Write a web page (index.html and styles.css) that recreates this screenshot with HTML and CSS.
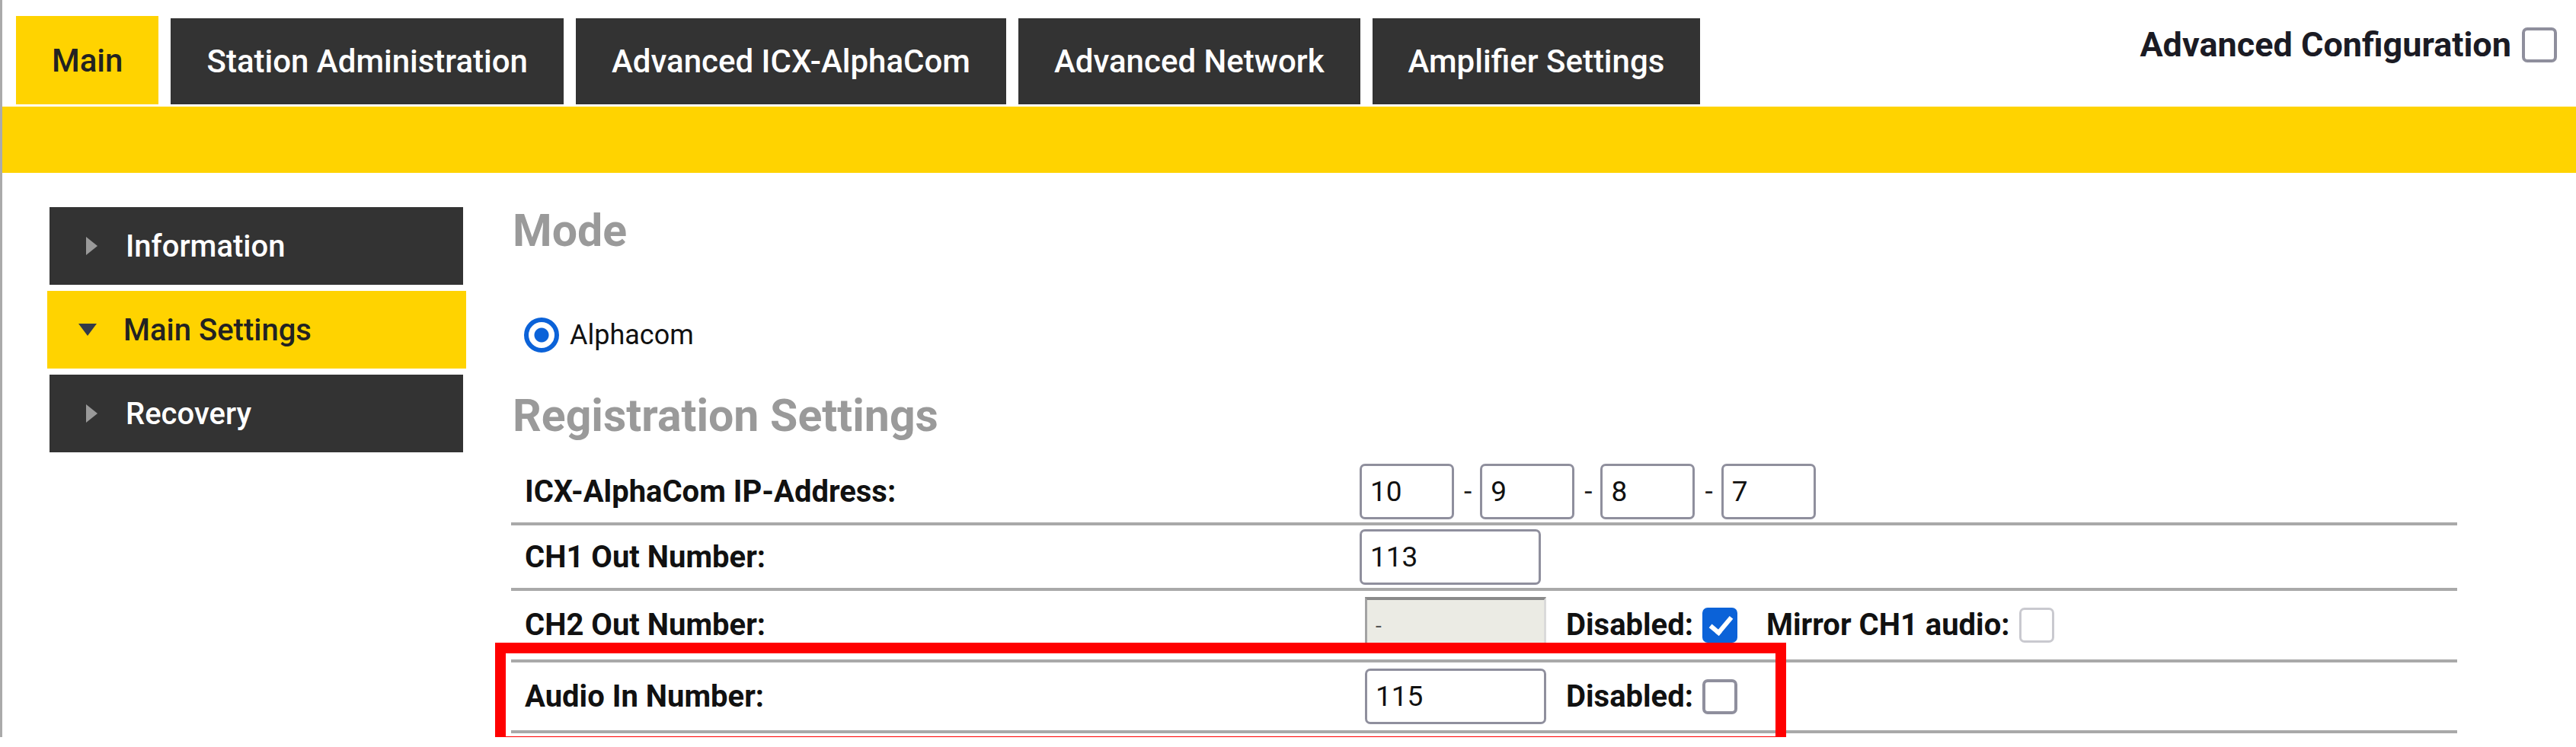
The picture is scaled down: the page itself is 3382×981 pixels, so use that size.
FILE: index.html
```html
<!DOCTYPE html>
<html lang="en">
<head>
    <meta charset="UTF-8">
    <meta name="viewport" content="width=device-width, initial-scale=1.0">
    <title>Main Settings</title>
    <link rel="stylesheet" href="styles.css">
</head>
<body>
    <div class="page">
        <header class="topbar">
            <nav class="tabs">
                <a class="tab active" href="#">Main</a>
                <a class="tab" href="#">Station Administration</a>
                <a class="tab" href="#">Advanced ICX-AlphaCom</a>
                <a class="tab" href="#">Advanced Network</a>
                <a class="tab" href="#">Amplifier Settings</a>
            </nav>
            <label class="adv-config">Advanced Configuration <input type="checkbox" class="chk"></label>
        </header>
        <div class="stripe"></div>

        <main class="layout">
            <aside class="sidebar">
                <a class="side-item" href="#"><span class="arrow right"></span>Information</a>
                <a class="side-item active" href="#"><span class="arrow down"></span>Main Settings</a>
                <a class="side-item" href="#"><span class="arrow right"></span>Recovery</a>
            </aside>

            <section class="content">
                <h2>Mode</h2>
                <label class="radio-line"><input type="radio" name="mode" class="radio" checked> Alphacom</label>

                <h2 class="reg-title">Registration Settings</h2>
                <div class="settings">
                    <div class="row">
                        <span class="label">ICX-AlphaCom IP-Address:</span>
                        <div class="value">
                            <input class="field ip" type="text" value="10">
                            <span class="sep">-</span>
                            <input class="field ip" type="text" value="9">
                            <span class="sep">-</span>
                            <input class="field ip" type="text" value="8">
                            <span class="sep">-</span>
                            <input class="field ip" type="text" value="7">
                        </div>
                    </div>
                    <div class="row">
                        <span class="label">CH1 Out Number:</span>
                        <div class="value">
                            <input class="field num" type="text" value="113">
                        </div>
                    </div>
                    <div class="row opt-row">
                        <span class="label">CH2 Out Number:</span>
                        <div class="value">
                            <input class="field num" type="text" value="-" disabled>
                            <label class="opt">Disabled: <input type="checkbox" class="chk" checked></label>
                            <label class="opt mirror">Mirror CH1 audio: <input type="checkbox" class="chk" disabled></label>
                        </div>
                    </div>
                    <div class="row opt-row">
                        <span class="label">Audio In Number:</span>
                        <div class="value">
                            <input class="field num" type="text" value="115">
                            <label class="opt">Disabled: <input type="checkbox" class="chk"></label>
                        </div>
                    </div>
                </div>
            </section>
        </main>

        <div class="highlight"></div>
    </div>
</body>
</html>
```

FILE: styles.css
```css
body {
    margin: 0;
    padding: 0;
    font-family: Roboto, "Noto Sans", sans-serif;
    color: #222;
    background: #fff;
    overflow: hidden;
}

.page {
    position: relative;
    height: 968px;
    border-left: 3px solid #aaa;
}

/* top tabs */
.topbar {
    display: flex;
    justify-content: space-between;
    align-items: flex-start;
    padding: 21px 25px 0 18px;
    height: 116px;
}

.tabs {
    display: flex;
    align-items: flex-end;
    gap: 16px;
    height: 116px;
}

.tab {
    display: flex;
    align-items: center;
    height: 113px;
    padding: 0 47px;
    background: #333;
    color: #fff;
    font-size: 42px;
    font-weight: 500;
    text-decoration: none;
    white-space: nowrap;
}

.tab.active {
    height: 116px;
    background: #ffd300;
    color: #222;
}

.adv-config {
    display: flex;
    align-items: center;
    gap: 14px;
    margin-top: 11px;
    font-size: 45px;
    font-weight: bold;
    color: #1b1b24;
}

.stripe {
    height: 87px;
    margin-top: 3px;
    background: #ffd300;
}

/* body area */
.layout {
    display: flex;
    align-items: flex-start;
    gap: 63px;
    padding: 41px 0 0 62px;
}

.sidebar {
    display: flex;
    flex-direction: column;
    gap: 8px;
    width: 543px;
    margin-top: 4px;
}

.side-item {
    display: flex;
    align-items: center;
    height: 102px;
    padding-left: 48px;
    background: #333;
    color: #fff;
    font-size: 40px;
    font-weight: 500;
    text-decoration: none;
}

.side-item.active {
    margin: 0 -4px 0 -3px;
    padding-left: 41px;
    background: #ffd300;
    color: #222;
}

.arrow {
    width: 0;
    height: 0;
}

.arrow.right {
    border-left: 15px solid #9a9a9a;
    border-top: 12px solid transparent;
    border-bottom: 12px solid transparent;
    margin-right: 37px;
}

.arrow.down {
    border-top: 16px solid #333a48;
    border-left: 12.5px solid transparent;
    border-right: 12.5px solid transparent;
    margin-right: 35px;
}

/* content */
.content {
    width: 2555px;
}

.content h2 {
    margin: 0;
    padding-left: 2px;
    font-size: 59px;
    line-height: 70px;
    font-weight: bold;
    color: #9a9a9a;
}

.radio-line {
    display: flex;
    align-items: center;
    gap: 14px;
    height: 46px;
    margin: 79px 0 0 17px;
    font-size: 36px;
    line-height: 46px;
    color: #111;
}

.radio {
    appearance: none;
    box-sizing: border-box;
    width: 46px;
    height: 46px;
    margin: 0;
    border: 6px solid #0b62d8;
    border-radius: 50%;
    background: radial-gradient(circle, #0b62d8 0 9px, #fff 10px);
}

.content h2.reg-title {
    margin-top: 48px;
}

.settings {
    margin-top: 23px;
}

.row {
    display: grid;
    grid-template-columns: 1114px auto;
    align-items: center;
    padding: 5px 0 4px;
    border-bottom: 4px solid #a9a9a9;
}

.row.opt-row {
    padding: 8px 0 9px;
}

.row.opt-row:last-child {
    padding-bottom: 8px;
}

.label {
    padding-left: 18px;
    font-size: 40px;
    font-weight: bold;
    color: #111;
}

.value {
    display: flex;
    align-items: center;
}

.opt-row .value {
    padding-left: 7px;
}

.field {
    appearance: none;
    box-sizing: border-box;
    height: 73px;
    margin: 0;
    padding: 0 0 0 11px;
    border: 3px solid #8f8f9d;
    border-radius: 7px;
    background: #fff;
    font-family: Roboto, sans-serif;
    font-size: 37px;
    color: #111;
}

.field.ip {
    width: 124px;
}

.field.num {
    width: 238px;
}

.field:disabled {
    border-width: 4px 3px 3px;
    border-color: #8a8a8a #dadada #dadada #a3a3a3;
    border-radius: 0;
    background: #ebebe4;
    color: #555;
    font-size: 28px;
}

.sep {
    margin: 0 11px 0 13px;
    font-size: 37px;
    color: #222;
}

.opt {
    display: flex;
    align-items: center;
    gap: 12px;
    margin-left: 26px;
    font-size: 40px;
    font-weight: bold;
    color: #111;
}

.opt.mirror {
    margin-left: 38px;
}

.chk {
    appearance: none;
    position: relative;
    box-sizing: border-box;
    width: 46px;
    height: 46px;
    margin: 0;
    border: 4px solid #8f8f9d;
    border-radius: 7px;
    background: #fff;
}

.chk:checked {
    border-color: #0b62d8;
    background: #0b62d8;
}

.chk:checked::after {
    content: "";
    position: absolute;
    left: 12px;
    top: 2px;
    width: 11px;
    height: 23px;
    border: solid #fff;
    border-width: 0 6px 6px 0;
    transform: rotate(40deg);
}

.chk:disabled {
    border: 3px solid #c9c9cf;
}

/* annotation frame */
.highlight {
    position: absolute;
    left: 647px;
    top: 844px;
    width: 1695px;
    height: 137px;
    box-sizing: border-box;
    border: 14px solid #ff0000;
}
```
